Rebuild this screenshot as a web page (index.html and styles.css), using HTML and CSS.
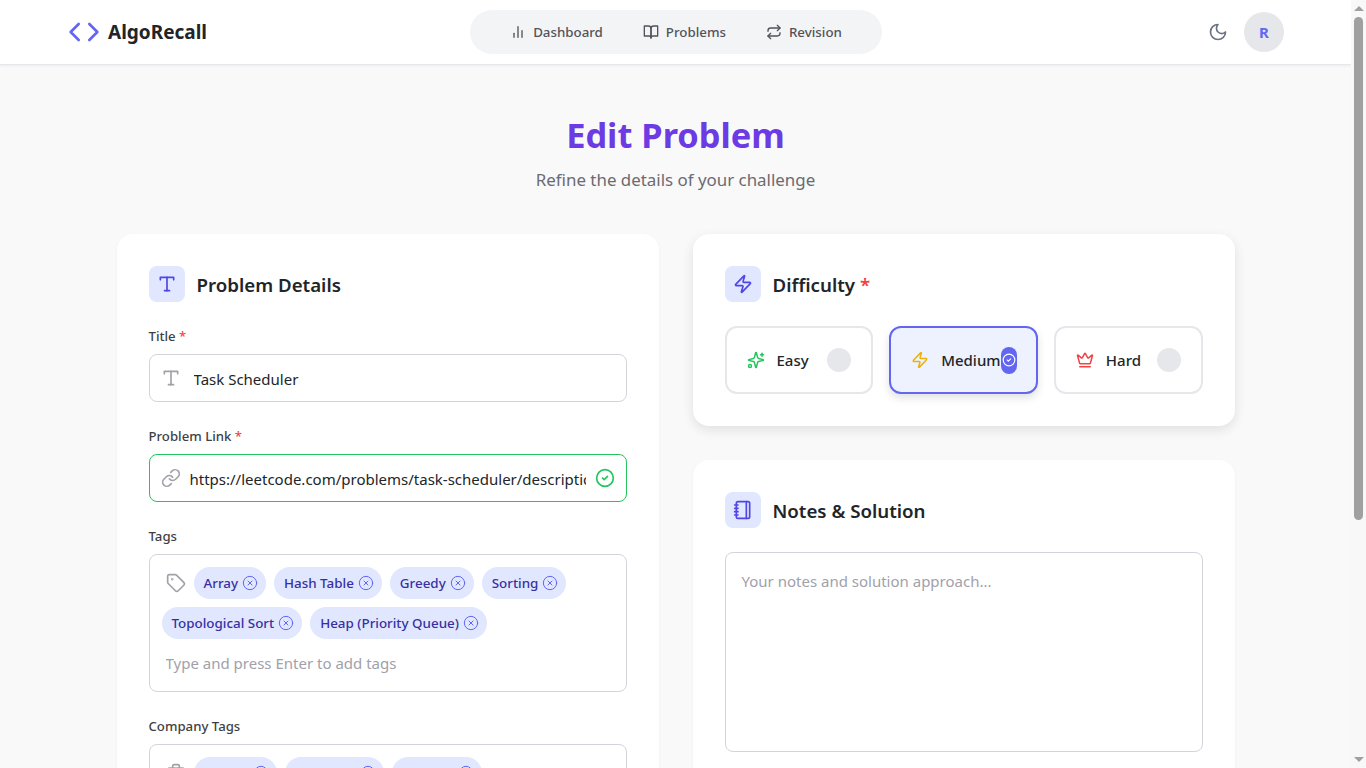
FILE: index.html
```html
<!DOCTYPE html>
<html lang="en">
  <head>
    <meta charset="UTF-8" />
    <meta name="viewport" content="width=device-width, initial-scale=1.0" />
    <title>Edit Problem</title>
    <link rel="stylesheet" href="styles.css">
  </head>
  <body>
    <header class="topbar">
      <a class="logo">
        <svg class="logo-icon" viewBox="0 0 24 24"><polyline points="16 18 22 12 16 6"/><polyline points="8 6 2 12 8 18"/></svg>
        <span>AlgoRecall</span>
      </a>
      <nav class="nav">
        <a class="nav-link">
          <svg class="icon-16" viewBox="0 0 24 24"><line x1="18" y1="20" x2="18" y2="10"/><line x1="12" y1="20" x2="12" y2="4"/><line x1="6" y1="20" x2="6" y2="14"/></svg>
          Dashboard
        </a>
        <a class="nav-link">
          <svg class="icon-16" viewBox="0 0 24 24"><path d="M2 3h6a4 4 0 0 1 4 4v14a3 3 0 0 0-3-3H2z"/><path d="M22 3h-6a4 4 0 0 0-4 4v14a3 3 0 0 1 3-3h7z"/></svg>
          Problems
        </a>
        <a class="nav-link">
          <svg class="icon-16" viewBox="0 0 24 24"><path d="m17 2 4 4-4 4"/><path d="M3 11v-1a4 4 0 0 1 4-4h14"/><path d="m7 22-4-4 4-4"/><path d="M21 13v1a4 4 0 0 1-4 4H3"/></svg>
          Revision
        </a>
      </nav>
      <div class="topbar-right">
        <svg class="moon" viewBox="0 0 24 24"><path d="M12 3a6 6 0 0 0 9 9 9 9 0 1 1-9-9Z"/></svg>
        <div class="avatar">R</div>
      </div>
    </header>

    <main class="page">
      <h1 class="page-title">Edit Problem</h1>
      <p class="page-sub">Refine the details of your challenge</p>

      <div class="columns">
        <section class="card">
          <div class="card-head">
            <span class="card-icon">
              <svg viewBox="0 0 24 24"><polyline points="4 7 4 4 20 4 20 7"/><line x1="9" y1="20" x2="15" y2="20"/><line x1="12" y1="4" x2="12" y2="20"/></svg>
            </span>
            <h2>Problem Details</h2>
          </div>

          <div class="field">
            <label class="field-label">Title <span class="req">*</span></label>
            <div class="input-wrap">
              <svg class="input-icon" viewBox="0 0 24 24"><polyline points="4 7 4 4 20 4 20 7"/><line x1="9" y1="20" x2="15" y2="20"/><line x1="12" y1="4" x2="12" y2="20"/></svg>
              <input class="text-input title-input" type="text" value="Task Scheduler" />
            </div>
          </div>

          <div class="field">
            <label class="field-label">Problem Link <span class="req">*</span></label>
            <div class="input-wrap">
              <svg class="input-icon" viewBox="0 0 24 24"><path d="M10 13a5 5 0 0 0 7.54.54l3-3a5 5 0 0 0-7.07-7.07l-1.72 1.71"/><path d="M14 11a5 5 0 0 0-7.54-.54l-3 3a5 5 0 0 0 7.07 7.07l1.71-1.71"/></svg>
              <input class="text-input link-input" type="text" value="https://leetcode.com/problems/task-scheduler/description/" />
              <svg class="valid-icon" viewBox="0 0 24 24"><circle cx="12" cy="12" r="10"/><path d="m9 12 2 2 4-4"/></svg>
            </div>
          </div>

          <div class="field">
            <label class="field-label">Tags</label>
            <div class="tag-box">
              <svg class="tag-box-icon" viewBox="0 0 24 24"><path d="M12.586 2.586A2 2 0 0 0 11.172 2H4a2 2 0 0 0-2 2v7.172a2 2 0 0 0 .586 1.414l8.704 8.704a2.426 2.426 0 0 0 3.42 0l6.58-6.58a2.426 2.426 0 0 0 0-3.42z"/><circle cx="7.5" cy="7.5" r=".5"/></svg>
              <span class="chip">Array <svg viewBox="0 0 24 24"><circle cx="12" cy="12" r="10"/><path d="m15 9-6 6"/><path d="m9 9 6 6"/></svg></span>
              <span class="chip">Hash Table <svg viewBox="0 0 24 24"><circle cx="12" cy="12" r="10"/><path d="m15 9-6 6"/><path d="m9 9 6 6"/></svg></span>
              <span class="chip">Greedy <svg viewBox="0 0 24 24"><circle cx="12" cy="12" r="10"/><path d="m15 9-6 6"/><path d="m9 9 6 6"/></svg></span>
              <span class="chip">Sorting <svg viewBox="0 0 24 24"><circle cx="12" cy="12" r="10"/><path d="m15 9-6 6"/><path d="m9 9 6 6"/></svg></span>
              <span class="chip">Topological Sort <svg viewBox="0 0 24 24"><circle cx="12" cy="12" r="10"/><path d="m15 9-6 6"/><path d="m9 9 6 6"/></svg></span>
              <span class="chip">Heap (Priority Queue) <svg viewBox="0 0 24 24"><circle cx="12" cy="12" r="10"/><path d="m15 9-6 6"/><path d="m9 9 6 6"/></svg></span>
              <input class="tag-input" type="text" placeholder="Type and press Enter to add tags" />
            </div>
          </div>

          <div class="field">
            <label class="field-label">Company Tags</label>
            <div class="tag-box">
              <svg class="tag-box-icon" viewBox="0 0 24 24"><path d="M16 20V4a2 2 0 0 0-2-2h-4a2 2 0 0 0-2 2v16"/><rect x="2" y="6" width="20" height="14" rx="2"/></svg>
              <span class="chip">Google <svg viewBox="0 0 24 24"><circle cx="12" cy="12" r="10"/><path d="m15 9-6 6"/><path d="m9 9 6 6"/></svg></span>
              <span class="chip">Facebook <svg viewBox="0 0 24 24"><circle cx="12" cy="12" r="10"/><path d="m15 9-6 6"/><path d="m9 9 6 6"/></svg></span>
              <span class="chip">Amazon <svg viewBox="0 0 24 24"><circle cx="12" cy="12" r="10"/><path d="m15 9-6 6"/><path d="m9 9 6 6"/></svg></span>
              <input class="tag-input" type="text" placeholder="Type and press Enter to add companies" />
            </div>
          </div>
        </section>

        <div class="side">
          <section class="card card-raised">
            <div class="card-head">
              <span class="card-icon">
                <svg viewBox="0 0 24 24"><path d="M4 14a1 1 0 0 1-.78-1.63l9.9-10.2a.5.5 0 0 1 .86.46l-1.92 6.02A1 1 0 0 0 13 10h7a1 1 0 0 1 .78 1.63l-9.9 10.2a.5.5 0 0 1-.86-.46l1.92-6.02A1 1 0 0 0 11 14z"/></svg>
              </span>
              <h2>Difficulty <span class="req">*</span></h2>
            </div>
            <div class="levels">
              <div class="level">
                <svg class="level-icon easy" viewBox="0 0 24 24"><path d="M9.937 15.5A2 2 0 0 0 8.5 14.063l-6.135-1.582a.5.5 0 0 1 0-.962L8.5 9.936A2 2 0 0 0 9.937 8.5l1.582-6.135a.5.5 0 0 1 .963 0L14.063 8.5A2 2 0 0 0 15.5 9.937l6.135 1.581a.5.5 0 0 1 0 .964L15.5 14.063a2 2 0 0 0-1.437 1.437l-1.582 6.135a.5.5 0 0 1-.963 0z"/><path d="M20 3v4"/><path d="M22 5h-4"/><circle cx="4" cy="20" r="2"/></svg>
                <span class="level-name">Easy</span>
                <span class="level-dot"></span>
              </div>
              <div class="level level-on">
                <svg class="level-icon medium" viewBox="0 0 24 24"><path d="M4 14a1 1 0 0 1-.78-1.63l9.9-10.2a.5.5 0 0 1 .86.46l-1.92 6.02A1 1 0 0 0 13 10h7a1 1 0 0 1 .78 1.63l-9.9 10.2a.5.5 0 0 1-.86-.46l1.92-6.02A1 1 0 0 0 11 14z"/></svg>
                <span class="level-name">Medium</span>
                <span class="level-check">
                  <svg viewBox="0 0 24 24"><circle cx="12" cy="12" r="10"/><path d="m9 12 2 2 4-4"/></svg>
                </span>
              </div>
              <div class="level">
                <svg class="level-icon hard" viewBox="0 0 24 24"><path d="M11.562 3.266a.5.5 0 0 1 .876 0L15.39 8.87a1 1 0 0 0 1.516.294L21.183 5.5a.5.5 0 0 1 .798.519l-2.834 10.246a1 1 0 0 1-.956.734H5.81a1 1 0 0 1-.957-.734L2.02 6.02a.5.5 0 0 1 .798-.519l4.276 3.664a1 1 0 0 0 1.516-.294z"/><path d="M5 21h14"/></svg>
                <span class="level-name">Hard</span>
                <span class="level-dot"></span>
              </div>
            </div>
          </section>

          <section class="card">
            <div class="card-head">
              <span class="card-icon">
                <svg viewBox="0 0 24 24"><path d="M2 6h4"/><path d="M2 10h4"/><path d="M2 14h4"/><path d="M2 18h4"/><rect x="4" y="2" width="16" height="20" rx="2"/><path d="M16 2v20"/></svg>
              </span>
              <h2>Notes &amp; Solution</h2>
            </div>
            <textarea class="notes" placeholder="Your notes and solution approach..."></textarea>
            <button class="save-btn" type="button">Save Changes</button>
          </section>
        </div>
      </div>
    </main>

    <div class="scrollbar" aria-hidden="true">
      <span class="scroll-up"></span>
      <span class="scroll-thumb"></span>
      <span class="scroll-down"></span>
    </div>
  </body>
</html>
```

FILE: styles.css
```css
* {
  box-sizing: border-box;
}

body {
  margin: 0;
  padding-right: 15px;
  background: #f9f9f9;
  color: #212529;
  font-family: "Noto Sans", "Liberation Sans", sans-serif;
}

svg {
  fill: none;
  stroke: currentColor;
  stroke-width: 2;
  stroke-linecap: round;
  stroke-linejoin: round;
  flex-shrink: 0;
}

/* top bar */
.topbar {
  display: grid;
  grid-template-columns: 1fr auto 1fr;
  align-items: center;
  height: 65px;
  padding: 0 67px 0 68px;
  background: #fff;
  border-bottom: 1px solid #e5e7eb;
  box-shadow: 0 1px 3px rgba(0, 0, 0, 0.06);
}

.logo {
  display: flex;
  align-items: center;
  gap: 8px;
  font-size: 19px;
  font-weight: 700;
  color: #212529;
}

.logo-icon {
  width: 32px;
  height: 32px;
  color: #6366f1;
}

.nav {
  display: flex;
  height: 44px;
  padding: 4px 20px;
  background: #f3f4f6;
  border-radius: 22px;
}

.nav-link {
  display: flex;
  align-items: center;
  gap: 7px;
  padding: 0 20px;
  font-size: 13.3px;
  font-weight: 500;
  color: #52525b;
}

.icon-16 {
  width: 16px;
  height: 16px;
}

.topbar-right {
  display: flex;
  align-items: center;
  justify-content: flex-end;
  gap: 16px;
}

.moon {
  width: 20px;
  height: 20px;
  color: #6b7280;
}

.avatar {
  display: flex;
  align-items: center;
  justify-content: center;
  width: 40px;
  height: 40px;
  border-radius: 50%;
  background: #e5e7eb;
  color: #6366f1;
  font-size: 15px;
  font-weight: 700;
}

/* page */
.page {
  padding: 48px 0;
}

.page-title {
  margin: 0 0 10px;
  font-size: 34.4px;
  line-height: 43px;
  font-weight: 700;
  text-align: center;
  color: #6d3be4;
}

.page-sub {
  margin: 0 0 40px;
  font-size: 16.9px;
  line-height: 28px;
  text-align: center;
  color: #6b6b70;
}

.columns {
  display: grid;
  grid-template-columns: 542px 542px;
  justify-content: center;
  align-items: start;
  gap: 34px;
}

.side {
  display: flex;
  flex-direction: column;
  gap: 34px;
}

.card {
  padding: 32px;
  background: #fff;
  border-radius: 16px;
  box-shadow: 0 1px 3px rgba(0, 0, 0, 0.05);
}

.card-raised {
  box-shadow: 0 4px 12px rgba(0, 0, 0, 0.1);
}

.card-head {
  display: flex;
  align-items: center;
  gap: 12px;
  margin-bottom: 24px;
}

.card-head h2 {
  margin: 0;
  font-size: 18.7px;
  font-weight: 600;
  color: #212529;
}

.card-icon {
  display: flex;
  align-items: center;
  justify-content: center;
  width: 36px;
  height: 36px;
  border-radius: 8px;
  background: #e0e7ff;
  color: #4f46e5;
}

.card-icon svg {
  width: 20px;
  height: 20px;
}

.req {
  color: #ef4444;
}

/* form */
.field {
  margin-bottom: 24px;
}

.field:last-child {
  margin-bottom: 0;
}

.field-label {
  display: block;
  margin-bottom: 8px;
  font-size: 13.2px;
  line-height: 20px;
  font-weight: 500;
  color: #3f3f46;
}

.input-wrap {
  position: relative;
}

.input-icon {
  position: absolute;
  left: 12px;
  top: 14px;
  width: 20px;
  height: 20px;
  color: #a1a1aa;
}

.text-input {
  display: block;
  width: 100%;
  height: 48px;
  border: 1px solid #d1d5db;
  border-radius: 8px;
  background: #fff;
  color: #212529;
  font-family: inherit;
  font-size: 15px;
  outline: none;
}

.title-input {
  padding: 2px 16px 0 44px;
}

.link-input {
  padding: 2px 40px 0 40px;
  border-color: #22c55e;
}

.valid-icon {
  position: absolute;
  right: 12px;
  top: 14px;
  width: 20px;
  height: 20px;
  color: #22c55e;
}

.tag-box {
  display: flex;
  flex-wrap: wrap;
  align-items: center;
  gap: 8px;
  padding: 12px;
  border: 1px solid #d1d5db;
  border-radius: 8px;
  background: #fff;
}

.tag-box-icon {
  width: 20px;
  height: 20px;
  margin-left: 4px;
  color: #a1a1aa;
}

.chip {
  display: inline-flex;
  align-items: center;
  gap: 4px;
  height: 32px;
  padding: 0 8px 0 10px;
  border-radius: 16px;
  background: #e0e7ff;
  color: #3730a3;
  font-size: 13.4px;
  font-weight: 500;
}

.chip svg {
  width: 16px;
  height: 16px;
  color: #6366f1;
  stroke-width: 1.5;
}

.tag-input {
  flex: 1 0 100%;
  height: 32px;
  padding: 0 4px;
  border: none;
  outline: none;
  background: transparent;
  font-family: inherit;
  font-size: 15px;
}

.tag-input::placeholder,
.notes::placeholder {
  color: #a1a1aa;
  opacity: 1;
}

/* difficulty */
.levels {
  display: grid;
  grid-template-columns: repeat(3, minmax(0, 1fr));
  gap: 16px;
}

.level {
  display: flex;
  align-items: center;
  height: 68px;
  padding: 0 20px;
  border: 2px solid #e5e7eb;
  border-radius: 12px;
  background: #fff;
}

.level-on {
  border-color: #6366f1;
  background: #eef2ff;
  box-shadow: 0 4px 8px rgba(0, 0, 0, 0.12);
}

.level-icon {
  width: 18px;
  height: 18px;
  margin-right: 12px;
}

.easy {
  color: #22c55e;
}

.medium {
  color: #eab308;
}

.hard {
  color: #ef4444;
}

.level-name {
  font-size: 15px;
  font-weight: 500;
  color: #212529;
}

.level-dot {
  width: 24px;
  height: 24px;
  margin-left: auto;
  border-radius: 50%;
  background: #e5e7eb;
}

.level-check {
  display: flex;
  align-items: center;
  justify-content: center;
  width: 16px;
  height: 27px;
  margin: 0 -1px 0 auto;
  border-radius: 8px;
  background: #6366f1;
  color: #fff;
}

.level-check svg {
  width: 14px;
  height: 14px;
}

/* notes */
.notes {
  display: block;
  width: 100%;
  height: 200px;
  padding: 18px 16px 15px;
  border: 1px solid #d1d5db;
  border-radius: 8px;
  background: #fff;
  font-family: inherit;
  font-size: 15px;
  resize: none;
  outline: none;
}

.save-btn {
  display: block;
  width: 100%;
  height: 48px;
  margin-top: 24px;
  border: none;
  border-radius: 8px;
  background: #6366f1;
  color: #fff;
  font-family: inherit;
  font-size: 15px;
  font-weight: 600;
}

/* window scrollbar, sits over the right edge of the page */
.scrollbar {
  position: fixed;
  top: 0;
  right: 0;
  bottom: 0;
  display: flex;
  flex-direction: column;
  align-items: center;
  width: 15px;
  padding: 6px 0;
  background: #f8f8f8;
}

.scroll-up,
.scroll-down {
  width: 0;
  height: 0;
  border-left: 5px solid transparent;
  border-right: 5px solid transparent;
}

.scroll-up {
  border-bottom: 5px solid #a0a0a0;
}

.scroll-down {
  margin-top: auto;
  border-top: 5px solid #a0a0a0;
}

.scroll-thumb {
  width: 9px;
  height: 503px;
  margin-top: 6px;
  border-radius: 5px;
  background: #a0a0a0;
}
```
